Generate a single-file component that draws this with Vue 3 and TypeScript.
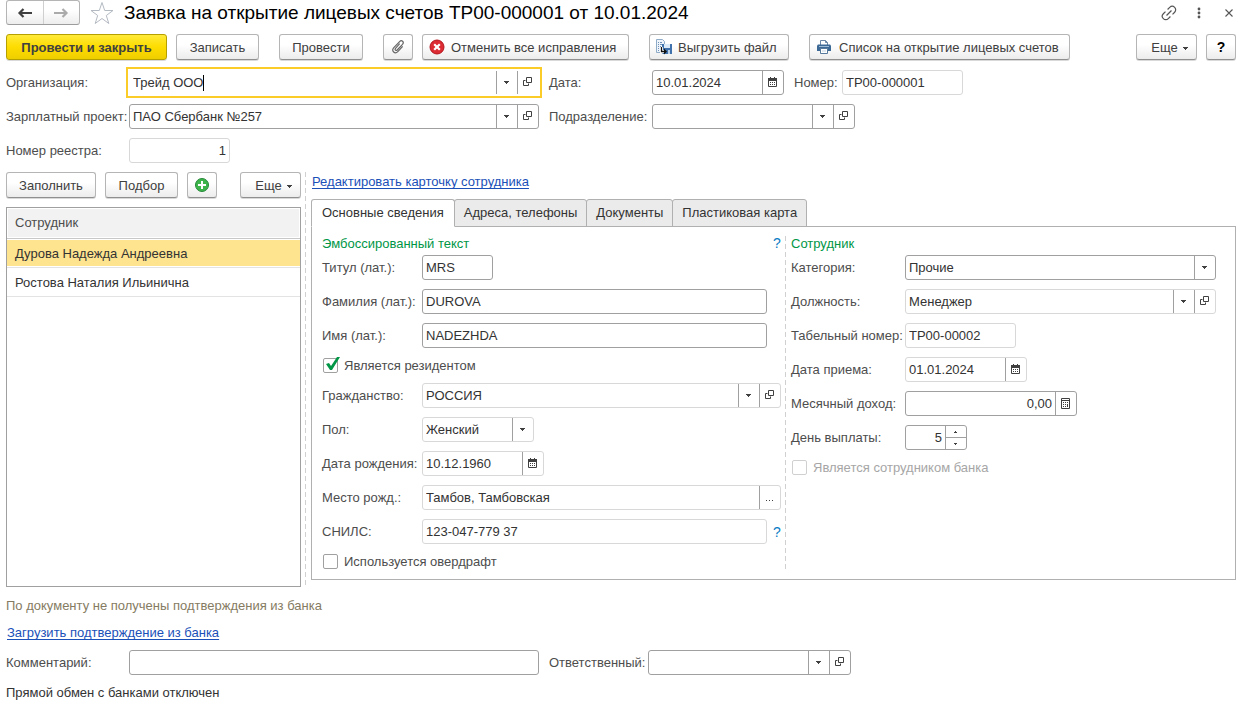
<script setup lang="ts">
import { h, ref, type FunctionalComponent } from 'vue'

type IconName = 'drop' | 'open' | 'calendar' | 'calc' | 'dots'

interface FieldDef {
  id: string
  label: string
  value: string
  size: string
  icons?: IconName[]
  soft?: boolean
  right?: boolean
  select?: boolean
  spin?: boolean
  help?: boolean
  check?: boolean
  disabled?: boolean
}

const iconTitles: Record<IconName, string> = {
  drop: 'Выбрать из списка',
  open: 'Открыть',
  calendar: 'Календарь',
  calc: 'Калькулятор',
  dots: 'Выбрать',
}

const icon = (name: string) =>
  h('svg', { class: 'glyph', viewBox: '0 0 12 12', 'aria-hidden': 'true' }, [h('use', { href: `#i-${name}` })])

const Control: FunctionalComponent<{ field: FieldDef }> = ({ field }) => {
  const parts = []
  if (field.select) {
    parts.push(h('select', { id: field.id, class: 'entry' }, [h('option', field.value)]))
    parts.push(h('span', { class: 'side' }, [icon('drop')]))
  } else {
    parts.push(h('input', { id: field.id, class: ['entry', { right: field.right }], type: 'text', value: field.value }))
    for (const name of field.icons ?? []) {
      parts.push(h('button', { class: 'side', type: 'button', 'aria-label': iconTitles[name] }, [icon(name)]))
    }
    if (field.spin) {
      parts.push(
        h('span', { class: 'side spin' }, [
          h('button', { type: 'button', 'aria-label': 'Больше' }, [icon('up')]),
          h('button', { type: 'button', 'aria-label': 'Меньше' }, [icon('down')]),
        ]),
      )
    }
  }
  return h('span', { class: ['control', `w-${field.size}`, { soft: field.soft }] }, parts)
}
Control.props = ['field']

const date: FieldDef = { id: 'doc-date', label: 'Дата:', value: '10.01.2024', size: 'docdate', icons: ['calendar'] }
const number: FieldDef = { id: 'doc-number', label: 'Номер:', value: 'ТР00-000001', size: 'number', soft: true }
const project: FieldDef = { id: 'project', label: 'Зарплатный проект:', value: 'ПАО Сбербанк №257', size: 'long', icons: ['drop', 'open'] }
const department: FieldDef = { id: 'department', label: 'Подразделение:', value: '', size: 'mid', icons: ['drop', 'open'] }
const registry: FieldDef = { id: 'registry', label: 'Номер реестра:', value: '1', size: 'registry', soft: true, right: true }
const comment: FieldDef = { id: 'comment', label: 'Комментарий:', value: '', size: 'long' }
const responsible: FieldDef = { id: 'responsible', label: 'Ответственный:', value: '', size: 'mid', icons: ['drop', 'open'] }

const personal: FieldDef[] = [
  { id: 'title', label: 'Титул (лат.):', value: 'MRS', size: 'title' },
  { id: 'surname', label: 'Фамилия (лат.):', value: 'DUROVA', size: 'name' },
  { id: 'name', label: 'Имя (лат.):', value: 'NADEZHDA', size: 'name' },
  { id: 'resident', label: 'Является резидентом', value: 'on', size: '', check: true },
  { id: 'citizen', label: 'Гражданство:', value: 'РОССИЯ', size: 'fill', icons: ['drop', 'open'], soft: true },
  { id: 'sex', label: 'Пол:', value: 'Женский', size: 'sex', soft: true, select: true },
  { id: 'birth', label: 'Дата рождения:', value: '10.12.1960', size: 'date', icons: ['calendar'], soft: true },
  { id: 'place', label: 'Место рожд.:', value: 'Тамбов, Тамбовская', size: 'fill', icons: ['dots'], soft: true },
  { id: 'snils', label: 'СНИЛС:', value: '123-047-779 37', size: 'name', soft: true, help: true },
  { id: 'overdraft', label: 'Используется овердрафт', value: '', size: '', check: true },
]

const job: FieldDef[] = [
  { id: 'category', label: 'Категория:', value: 'Прочие', size: 'fill', select: true },
  { id: 'position', label: 'Должность:', value: 'Менеджер', size: 'fill', icons: ['drop', 'open'], soft: true },
  { id: 'tabno', label: 'Табельный номер:', value: 'ТР00-00002', size: 'tabno', soft: true },
  { id: 'hired', label: 'Дата приема:', value: '01.01.2024', size: 'date', icons: ['calendar'], soft: true },
  { id: 'income', label: 'Месячный доход:', value: '0,00', size: 'income', icons: ['calc'], right: true },
  { id: 'payday', label: 'День выплаты:', value: '5', size: 'payday', spin: true, right: true },
  { id: 'bankstaff', label: 'Является сотрудником банка', value: '', size: '', check: true, disabled: true },
]

const employees = ['Дурова Надежда Андреевна', 'Ростова Наталия Ильинична']
const selected = ref(0)
const tabs = ['Основные сведения', 'Адреса, телефоны', 'Документы', 'Пластиковая карта']
const tab = ref(0)
const organization = ref('Трейд ООО')
</script>

<template>
  <main class="page">
    <svg class="defs" aria-hidden="true">
      <symbol id="i-drop" viewBox="0 0 12 12"><path d="M3 4h5v1H7v1H6v1H5V6H4V5H3z" fill="#404040" /></symbol>
      <symbol id="i-up" viewBox="0 0 12 12"><path d="M5 5h1v1h1v1H4V6h1z" fill="#404040" /></symbol>
      <symbol id="i-down" viewBox="0 0 12 12"><path d="M4 5h3v1H6v1H5V6H4z" fill="#404040" /></symbol>
      <symbol id="i-open" viewBox="0 0 12 12">
        <path d="M4.500 .5h5v5h-5zM3.500 3.500h-2v5h5v-2" fill="none" stroke="#404040" />
      </symbol>
      <symbol id="i-calendar" viewBox="0 0 12 12">
        <path d="M1.500 1.500h8v8h-8z" fill="#fff" stroke="#404040" />
        <path d="M1 1h9v3H1zM3 0h1v1H3zM7 0h1v1H7zM3 5h1v1H3zM5 5h1v1H5zM7 5h1v1H7zM3 7h1v1H3zM5 7h1v1H5zM7 7h1v1H7z" fill="#404040" />
      </symbol>
      <symbol id="i-calc" viewBox="0 0 12 12">
        <path d="M1.500 .5h8v10h-8zM1.500 2.500h8" fill="#fff" stroke="#404040" />
        <path d="M3 4h1v1H3zM5 4h1v1H5zM7 4h1v1H7zM3 6h1v1H3zM5 6h1v1H5zM7 6h1v3H7zM3 8h1v1H3zM5 8h1v1H5z" fill="#404040" />
      </symbol>
      <symbol id="i-dots" viewBox="0 0 12 12"><path d="M2 8h1v1H2zM5 8h1v1H5zM8 8h1v1H8z" fill="#404040" /></symbol>
    </svg>

    <header class="titlebar">
      <div class="nav">
        <button type="button" aria-label="Назад">
          <svg width="16" height="12" viewBox="0 0 16 12"><path d="M6.500 2 2.500 6l4 4M2.500 6H15" fill="none" stroke="#404040" stroke-width="2.200" /></svg>
        </button>
        <button type="button" aria-label="Вперед">
          <svg width="16" height="12" viewBox="0 0 16 12"><path d="m9.500 2 4 4-4 4M13.500 6H1" fill="none" stroke="#ababab" stroke-width="2.200" /></svg>
        </button>
      </div>
      <button class="plain star" type="button" aria-label="В избранное">
        <svg width="24" height="24" viewBox="0 0 24 24"><path d="m12 1.500 2.700 8h8.300l-6.700 5 2.500 8-6.800-5-6.800 5 2.500-8-6.700-5h8.300z" fill="#fff" stroke="#b4bac2" /></svg>
      </button>
      <h1>Заявка на открытие лицевых счетов ТР00-000001 от 10.01.2024</h1>
      <div class="window">
        <button class="plain" type="button" aria-label="Ссылка">
          <svg width="18" height="18" viewBox="0 0 18 18"><g transform="rotate(-45 9 9)" fill="none" stroke="#555" stroke-width="1.200"><path d="M7.500 5.500h-3a3.500 3.500 0 0 0 0 7h3M10.500 5.500h3a3.500 3.500 0 0 1 0 7h-3M5.500 9h7" /></g></svg>
        </button>
        <button class="plain" type="button" aria-label="Меню">
          <svg width="4" height="12" viewBox="0 0 4 12"><circle cx="2" cy="2" r="1.400" fill="#555" /><circle cx="2" cy="6" r="1.400" fill="#555" /><circle cx="2" cy="10" r="1.400" fill="#555" /></svg>
        </button>
        <button class="plain" type="button" aria-label="Закрыть">
          <svg width="8" height="8" viewBox="0 0 8 8"><path d="m.5.500 7 7M7.500.500l-7 7" stroke="#555" stroke-width="1.100" /></svg>
        </button>
      </div>
    </header>

    <div class="toolbar">
      <div class="group">
        <button class="btn primary b-main" type="button">Провести и закрыть</button>
        <button class="btn b-save" type="button">Записать</button>
      </div>
      <button class="btn b-post" type="button">Провести</button>
      <div class="group">
        <button class="btn b-icon" type="button" aria-label="Присоединенные файлы">
          <svg width="14" height="14" viewBox="0 0 14 14"><path d="M8.700 3.700 4.500 8.400c-1.100 1.300.5 2.800 1.700 1.600l5.300-5.700c2-2.300-.8-4.800-2.900-2.700L2.800 7.700c-2.900 3.300 1.200 6.800 4 3.900l4.900-5.200" fill="none" stroke="#666" stroke-width="1.200" /></svg>
        </button>
        <button class="btn wide b-cancel" type="button">
          <svg width="16" height="16" viewBox="0 0 16 16"><circle cx="8" cy="8" r="7" fill="#dc2b32" stroke="#b3161d" /><path d="m5.200 5.200 5.600 5.600m0-5.600-5.600 5.600" stroke="#fff" stroke-width="2.200" /></svg>
          Отменить все исправления
        </button>
      </div>
      <button class="btn wide b-export" type="button">
        <svg width="16" height="16" viewBox="0 0 16 16">
          <path d="M.5.500h6l2 2v11h-8z" fill="#eef4fa" stroke="#8eabc8" />
          <path d="M2 3.500h1M4 3.500h2M2 5.500h1M4 5.500h3M2 7.500h1M4 7.500h1M2 9.500h1M4 9.500h1M2 11.500h1" stroke="#6f93b8" />
          <path d="M6 5h10v10H7l-1-1z" fill="#3f72ad" />
          <path d="M8 5h6v4H8z" fill="#dceaf7" /><path d="M12 11h2v4h-2z" fill="#bcd3ea" />
          <path d="M5.500 8v4.500H9" fill="none" stroke="#fff" stroke-width="3" />
          <path d="M5.500 8v4.500H9" fill="none" stroke="#111" stroke-width="1.300" /><path d="m8 9.500 3 3-3 3z" fill="#111" />
        </svg>
        Выгрузить файл
      </button>
      <button class="btn wide b-list" type="button">
        <svg width="14" height="14" viewBox="0 0 14 14">
          <path d="M3.500 5V.5h5l2 2V5" fill="#fff" stroke="#6b87a5" /><path d="M8.500.500v2h2" fill="none" stroke="#6b87a5" />
          <path d="M1 4.500h12l1 1V11H0V5.500z" fill="#3c6896" /><path d="M2 6.500h10" stroke="#9db8d3" />
          <path d="M3.500 8.500h7v5h-7z" fill="#fff" stroke="#56789b" /><path d="M5 11h4" stroke="#c2cfdd" />
        </svg>
        Список на открытие лицевых счетов
      </button>
      <div class="group end">
        <button class="btn b-more" type="button">Еще <svg class="caret-down" width="5" height="3" viewBox="0 0 5 3"><path d="M0 0h5v1H4v1H3v1H2V2H1V1H0z" fill="#404040" /></svg></button>
        <button class="btn b-icon help-btn" type="button">?</button>
      </div>
    </div>

    <section class="form">
      <div class="line">
        <label class="lead" for="organization">Организация:</label>
        <span class="control w-long active">
          <span class="typed">
            <input id="organization" v-model="organization" class="entry grow" type="text" />
            <span class="cursor"></span>
          </span>
          <button class="side" type="button" aria-label="Выбрать из списка"><svg class="glyph" viewBox="0 0 12 12"><use href="#i-drop" /></svg></button>
          <button class="side" type="button" aria-label="Открыть"><svg class="glyph" viewBox="0 0 12 12"><use href="#i-open" /></svg></button>
        </span>
        <label class="second" :for="date.id">{{ date.label }}</label>
        <Control :field="date" />
        <label class="third" :for="number.id">{{ number.label }}</label>
        <Control :field="number" />
      </div>
      <div class="line">
        <label class="lead" :for="project.id">{{ project.label }}</label>
        <Control :field="project" />
        <label class="second" :for="department.id">{{ department.label }}</label>
        <Control :field="department" />
      </div>
      <div class="line">
        <label class="lead" :for="registry.id">{{ registry.label }}</label>
        <Control :field="registry" />
      </div>
    </section>

    <div class="work">
      <section class="staff">
        <div class="staff-bar">
          <button class="btn b-fill" type="button">Заполнить</button>
          <button class="btn b-pick" type="button">Подбор</button>
          <button class="btn b-icon" type="button" aria-label="Добавить">
            <svg width="16" height="16" viewBox="0 0 16 16"><circle cx="8" cy="8" r="6.500" fill="#3db54a" stroke="#25893a" /><path d="M8 4v8M4 8h8" stroke="#fff" stroke-width="2" /></svg>
          </button>
          <button class="btn b-more end" type="button">Еще <svg class="caret-down" width="5" height="3" viewBox="0 0 5 3"><path d="M0 0h5v1H4v1H3v1H2V2H1V1H0z" fill="#404040" /></svg></button>
        </div>
        <div class="list">
          <table>
            <thead><tr><th scope="col">Сотрудник</th></tr></thead>
            <tbody>
              <tr v-for="(name, i) in employees" :key="name" :class="{ selected: i === selected }" @click="selected = i">
                <td>{{ name }}</td>
              </tr>
            </tbody>
          </table>
        </div>
      </section>

      <div class="divider"></div>

      <section class="card">
        <a class="link edit" href="#">Редактировать карточку сотрудника</a>
        <div class="tabs" role="tablist">
          <button v-for="(name, i) in tabs" :key="name" type="button" role="tab" :aria-selected="i === tab" :class="['tab', { on: i === tab }]" @click="tab = i">{{ name }}</button>
        </div>
        <div class="panel">
          <div class="column personal">
            <div class="heading"><h2>Эмбоссированный текст</h2><button class="plain hint" type="button">?</button></div>
            <div v-for="f in personal" :key="f.id" :class="f.check ? 'tick' : 'row'">
              <template v-if="f.check">
                <input :id="f.id" type="checkbox" :checked="f.value === 'on'" />
                <label :for="f.id">{{ f.label }}</label>
              </template>
              <template v-else>
                <label :for="f.id">{{ f.label }}</label>
                <Control :field="f" />
                <button v-if="f.help" class="plain hint" type="button">?</button>
              </template>
            </div>
          </div>
          <div class="divider"></div>
          <div class="column job">
            <div class="heading"><h2>Сотрудник</h2></div>
            <div v-for="f in job" :key="f.id" :class="f.check ? 'tick' : 'row'">
              <template v-if="f.check">
                <input :id="f.id" type="checkbox" :disabled="f.disabled" />
                <label :for="f.id">{{ f.label }}</label>
              </template>
              <template v-else>
                <label :for="f.id">{{ f.label }}</label>
                <Control :field="f" />
              </template>
            </div>
          </div>
        </div>
      </section>
    </div>

    <footer class="bottom">
      <p class="notice">По документу не получены подтверждения из банка</p>
      <p class="load"><a class="link" href="#">Загрузить подтверждение из банка</a></p>
      <div class="line">
        <label class="lead" :for="comment.id">{{ comment.label }}</label>
        <Control :field="comment" />
        <label class="second narrow" :for="responsible.id">{{ responsible.label }}</label>
        <Control :field="responsible" />
      </div>
      <p>Прямой обмен с банками отключен</p>
    </footer>
  </main>
</template>

<style>
body {
  background: #fff;
}
.control {
  display: flex;
  box-sizing: border-box;
  height: 25px;
  border: 1px solid #a0a0a0;
  border-radius: 3px;
  background: #fff;
  min-width: 0;
}
.control.soft {
  border-color: #d8d8d8;
}
.control .entry {
  flex: 1;
  width: 0;
  min-width: 0;
  box-sizing: border-box;
  margin: 0;
  padding: 0 3px;
  border: 0;
  outline: 0;
  background: none;
  color: #333;
  font: inherit;
  appearance: none;
}
.control .right {
  text-align: right;
}
.control .side {
  display: flex;
  flex: none;
  align-items: center;
  justify-content: center;
  box-sizing: border-box;
  width: 21px;
  margin: 0;
  padding: 0;
  border: 0;
  border-left: 1px solid #a0a0a0;
  background: none;
}
.control .glyph {
  display: block;
  flex: none;
  width: 12px;
  height: 12px;
}
.control .spin {
  flex-direction: column;
  align-items: stretch;
}
.control .spin button {
  display: flex;
  flex: 1;
  align-items: center;
  justify-content: center;
  min-height: 0;
  padding: 0;
  border: 0;
  background: none;
  overflow: hidden;
}
.control .spin button + button {
  border-top: 1px solid #a0a0a0;
}
</style>

<style scoped>
.page {
  box-sizing: border-box;
  padding: 0 9px 6px 6px;
  color: #333;
  font: 13px/17px "Liberation Sans", Arial, sans-serif;
}
.defs {
  position: absolute;
  width: 0;
  height: 0;
}
p,
h1,
h2 {
  margin: 0;
  font-weight: 400;
}
button {
  font: inherit;
}
label {
  flex: none;
  color: #4d4d4d;
  white-space: nowrap;
}
.plain {
  display: flex;
  align-items: center;
  justify-content: center;
  padding: 0;
  border: 0;
  background: none;
}
.titlebar {
  display: flex;
  align-items: center;
  height: 25px;
}
.nav {
  display: flex;
  box-sizing: border-box;
  width: 74px;
  height: 25px;
  border: 1px solid #b5b5b5;
  border-bottom-color: #9c9c9c;
  border-radius: 3px;
  background: linear-gradient(#fff 40%, #ededed);
}
.nav button {
  display: flex;
  flex: 1;
  align-items: center;
  justify-content: center;
  padding: 0;
  border: 0;
  background: none;
}
.nav button + button {
  border-left: 1px solid #cfcfcf;
}
.star {
  margin: 0 10px;
}
h1 {
  color: #000;
  font-size: 19px;
  line-height: 24px;
  white-space: nowrap;
}
.window {
  display: flex;
  align-items: center;
  gap: 19px;
  margin-left: auto;
  padding-right: 3px;
}
.window button:last-child {
  margin-left: 5px;
}
.toolbar {
  display: flex;
  gap: 20px;
  margin-top: 9px;
}
.group {
  display: flex;
  gap: 9px;
}
.end {
  margin-left: auto;
}
.btn {
  display: flex;
  flex: none;
  align-items: center;
  justify-content: center;
  box-sizing: border-box;
  height: 26px;
  padding: 0;
  border: 1px solid #b5b5b5;
  border-bottom: 1px solid #8f8f8f;
  border-radius: 3px;
  background: linear-gradient(#fff 40%, #ececec);
  box-shadow: 0 1px 0 #d9d9d9;
  color: #404040;
  white-space: nowrap;
}
.btn svg {
  flex: none;
}
.primary {
  border-color: #b5a000;
  background: linear-gradient(#ffea3a, #fddc00 50%, #efce00);
  font-weight: 700;
}
.wide {
  justify-content: flex-start;
  gap: 6px;
  padding-left: 6px;
}
.b-main {
  width: 161px;
}
.b-save {
  width: 83px;
}
.b-post {
  width: 84px;
}
.b-icon {
  width: 30px;
}
.b-cancel {
  width: 207px;
}
.b-export {
  width: 140px;
}
.b-list {
  width: 261px;
  gap: 8px;
  padding-left: 7px;
}
.b-more {
  width: 61px;
  gap: 5px;
  padding-left: 6px;
}
.caret-down {
  margin-top: 2px;
}
.b-fill {
  width: 90px;
}
.b-pick {
  width: 73px;
}
.help-btn {
  color: #000;
  font-size: 14px;
  font-weight: 700;
}
.form {
  display: grid;
  gap: 9px;
  margin-top: 10px;
}
.line {
  display: flex;
  align-items: center;
}
.lead {
  width: 123px;
}
.second {
  width: 103px;
  margin-left: 10px;
}
.narrow {
  width: 99px;
}
.third {
  width: 48px;
  margin-left: 10px;
}
.active {
  border-color: #fff;
  border-radius: 0;
  outline: 2px solid #fbcb27;
  outline-offset: 1px;
}
.typed {
  display: flex;
  flex: 1;
  align-items: center;
}
.control .grow {
  flex: none;
  width: auto;
  height: 100%;
  padding-right: 0;
  field-sizing: content;
}
.cursor {
  width: 1px;
  height: 16px;
  background: #000;
}
.w-long {
  width: 410px;
}
.w-mid {
  width: 203px;
}
.w-docdate {
  width: 132px;
}
.w-number {
  width: 121px;
}
.w-registry {
  width: 101px;
}
.w-title {
  width: 71px;
}
.w-name {
  flex: 1;
  margin-right: 14px;
}
.w-name:has(+ .hint) {
  margin-right: 0;
}
.w-fill {
  flex: 1;
}
.w-sex {
  width: 112px;
}
.w-date {
  width: 122px;
}
.w-tabno {
  width: 111px;
}
.w-income {
  width: 172px;
}
.w-payday {
  width: 62px;
}
.work {
  display: flex;
  margin-top: 9px;
}
.divider {
  flex: none;
  width: 1px;
  margin: 0 5px 0 4px;
  background: repeating-linear-gradient(#d0d0d0 0 5px, transparent 5px 8px);
}
.staff {
  display: flex;
  flex: none;
  flex-direction: column;
  gap: 9px;
  width: 295px;
}
.staff-bar {
  display: flex;
  gap: 9px;
}
.list {
  flex: 1;
  border: 1px solid #a0a0a0;
}
table {
  width: 100%;
  border-collapse: separate;
  border-spacing: 0;
}
th,
td {
  box-sizing: border-box;
  height: 29px;
  padding: 0 8px;
  border-bottom: 1px solid #e3e3e3;
  text-align: left;
  font-weight: 400;
}
th {
  height: 31px;
  padding-bottom: 2px;
  border-color: #c8c8c8;
  background: #f2f2f2;
  box-shadow: inset 0 0 0 1px #fff;
  color: #4d4d4d;
}
.selected td {
  background: #ffe48f;
  box-shadow: inset 0 1px #fff, inset 0 -1px #fff;
}
.card {
  display: flex;
  flex: 1;
  flex-direction: column;
  min-width: 0;
  margin-bottom: 7px;
}
.link {
  color: #1a50b8;
  text-decoration: underline;
  text-underline-offset: 2px;
  text-decoration-skip-ink: none;
}
.edit {
  align-self: flex-start;
  margin: 0 0 8px 1px;
  line-height: 19px;
}
.tabs {
  display: flex;
}
.tab {
  height: 28px;
  margin: 0 0 -1px -1px;
  padding: 0 9px 2px;
  border: 1px solid #b0b0b0;
  border-radius: 3px 3px 0 0;
  background: #ebebeb;
  color: #333;
}
.tab:first-child {
  margin-left: 0;
  padding: 0 10px 2px;
}
.tab.on {
  position: relative;
  border-bottom-color: #fff;
  background: #fff;
}
.panel {
  display: flex;
  flex: 1;
  padding: 9px 19px 9px 10px;
  border: 1px solid #b0b0b0;
}
.column {
  display: grid;
  flex: 459 1 0;
  align-content: start;
  gap: 9px;
  min-width: 0;
}
.job {
  flex-grow: 425;
}
.heading {
  display: flex;
  justify-content: space-between;
  height: 16px;
  margin-bottom: -6px;
}
h2 {
  color: #009646;
  font-size: 13px;
  line-height: 16px;
}
.row {
  display: flex;
  align-items: center;
}
.personal .row label {
  width: 100px;
}
.job .row label {
  width: 114px;
}
.hint {
  box-sizing: border-box;
  width: 14px;
  padding-left: 6px;
  color: #0a7cc4;
  font-size: 14px;
  line-height: 14px;
}
.heading .hint {
  align-items: flex-start;
}
.tick {
  display: flex;
  align-items: center;
  height: 17px;
}
.tick input {
  box-sizing: border-box;
  width: 15px;
  height: 15px;
  margin: 0 6px 0 1px;
  border: 1px solid #a0a0a0;
  border-radius: 2px;
  background: #fff;
  appearance: none;
}
.tick input:checked {
  position: relative;
}
.tick input:checked::after {
  position: absolute;
  inset: -3px -3px 0 0;
  background: #009646;
  clip-path: polygon(2px 8px, 5px 7px, 7px 10px, 13px 1px, 16px 1px, 8px 14px, 6px 14px);
  content: "";
}
.tick input:disabled {
  border-color: #d0d0d0;
}
.tick input:disabled + label {
  color: #a6a6a6;
}
.bottom {
  display: grid;
  gap: 9px;
  margin-top: 10px;
}
.load {
  padding: 1px 0 0 1px;
}
.notice {
  color: #857b62;
}
</style>
